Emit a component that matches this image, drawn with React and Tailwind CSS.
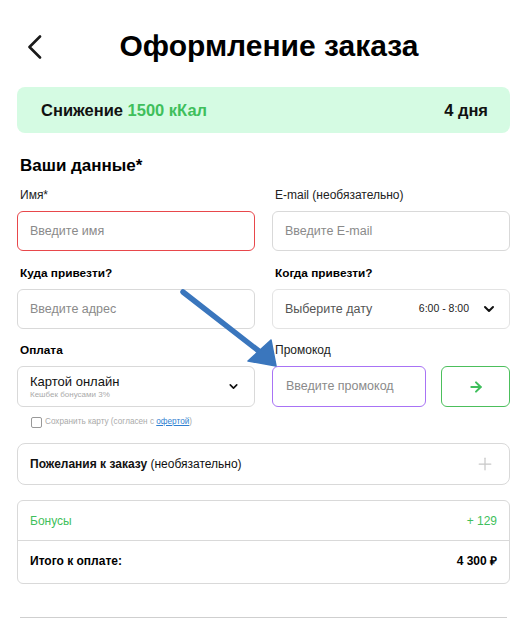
import React from "react";
import { ChevronDown, ArrowRight, Plus } from "lucide-react";

const font = { fontFamily: '"Liberation Sans", Arial, sans-serif' };

function Field({ label, bold, children }) {
    return (
        <div className="flex flex-col">
            <div className={`h-[19px] leading-[19px] mb-[6px] pl-[3px] ${bold ? "text-[11.8px] font-bold text-black" : "text-[12px] text-[#222]"}`}>
                {label}
            </div>
            {children}
        </div>
    );
}

export default function App() {
    return (
        <div className="relative w-[527px] h-[618px] bg-white overflow-hidden" style={font}>
            <div className="px-[17px]">
                <div className="relative h-[87px] flex items-center justify-center pt-[4px] pl-[11px]">
                    <svg className="absolute left-[10px] top-[35px]" width="16" height="24" viewBox="0 0 16 24">
                        <polyline points="13,1.5 2.5,12 13,22.5" fill="none" stroke="#1a1a1a" strokeWidth="2.6" strokeLinecap="round" strokeLinejoin="round" />
                    </svg>
                    <h1 className="text-[30px] font-bold text-black">Оформление заказа</h1>
                </div>

                <div className="h-[46px] rounded-[8px] bg-[#d5fbe3] flex items-center justify-between pl-[24px] pr-[22px]">
                    <div className="text-[16.5px] font-bold text-[#111]">
                        Снижение <span className="text-[#3fbf5c]">1500 кКал</span>
                    </div>
                    <div className="text-[16.5px] font-bold text-[#111]">4 дня</div>
                </div>

                <h2 className="mt-[22px] ml-[3px] text-[17px] font-bold text-black leading-[22px]">Ваши данные*</h2>

                <div className="grid grid-cols-2 gap-x-[17px] mt-[9px]">
                    <Field label="Имя*">
                        <div className="h-[40px] rounded-[6px] border border-[#e8474b] flex items-center px-[12px] text-[12.5px] text-[#8a8a8a]">
                            Введите имя
                        </div>
                    </Field>
                    <Field label="E-mail (необязательно)">
                        <div className="h-[40px] rounded-[6px] border border-[#d9d9d9] flex items-center px-[12px] text-[12.5px] text-[#8a8a8a]">
                            Введите E-mail
                        </div>
                    </Field>
                </div>

                <div className="grid grid-cols-2 gap-x-[17px] mt-[13px]">
                    <Field label="Куда привезти?" bold>
                        <div className="h-[40px] rounded-[6px] border border-[#d9d9d9] flex items-center px-[12px] text-[12.5px] text-[#8a8a8a]">
                            Введите адрес
                        </div>
                    </Field>
                    <Field label="Когда привезти?" bold>
                        <div className="h-[40px] rounded-[6px] border border-[#e3e3e3] flex items-center px-[12px] text-[12.5px] text-[#555]">
                            <span className="flex-1">Выберите дату</span>
                            <span className="text-[10.5px] text-[#222] mr-[12px]">6:00 - 8:00</span>
                            <ChevronDown size={16} strokeWidth={3} className="text-[#111]" />
                        </div>
                    </Field>
                </div>

                <div className="grid grid-cols-2 gap-x-[17px] mt-[12px]">
                    <Field label="Оплата" bold>
                        <div className="h-[41px] rounded-[6px] border border-[#d9d9d9] flex items-center pl-[12px] pr-[14px]">
                            <div className="flex-1 flex flex-col leading-none">
                                <span className="text-[13px] text-[#111]">Картой онлайн</span>
                                <span className="text-[8px] text-[#aaa] mt-[3px]">Кешбек бонусами 3%</span>
                            </div>
                            <ChevronDown size={13} strokeWidth={3} className="text-[#111]" />
                        </div>
                    </Field>
                    <Field label="Промокод">
                        <div className="flex gap-[15px]">
                            <div className="flex-1 h-[41px] rounded-[6px] border border-[#a873f5] flex items-center px-[13px] text-[12.5px] text-[#8a8a8a]">
                                Введите промокод
                            </div>
                            <div className="w-[69px] h-[41px] rounded-[6px] border border-[#4cbf5c] flex items-center justify-center">
                                <ArrowRight size={16} strokeWidth={3} className="text-[#3fbf5c]" />
                            </div>
                        </div>
                    </Field>
                </div>

                <div className="flex items-center mt-[9px] ml-[14px] text-[8.2px] text-[#aaa]">
                    <span className="w-[11px] h-[11px] border border-[#999] rounded-[2px] mr-[3px]" />
                    Сохранить карту (согласен с&nbsp;<span className="text-[#2f7fd1] underline">офертой</span>)
                </div>

                <div className="mt-[15px] h-[42px] rounded-[8px] border border-[#d9d9d9] flex items-center justify-between pl-[12px] pr-[14px]">
                    <div className="text-[12px] text-[#111]">
                        <span className="font-bold">Пожелания к заказу</span> (необязательно)
                    </div>
                    <Plus size={20} strokeWidth={1.5} className="text-[#c8c8c8]" />
                </div>

                <div className="mt-[15px] rounded-[6px] border border-[#d9d9d9]">
                    <div className="h-[40px] flex items-center justify-between px-[12px] text-[12px] text-[#3fbf5c] border-b border-[#d9d9d9]">
                        <span>Бонусы</span>
                        <span>+ 129</span>
                    </div>
                    <div className="h-[42px] flex items-center justify-between px-[12px] pb-[2px] text-[12px] font-bold text-black">
                        <span>Итого к оплате:</span>
                        <span>4 300 ₽</span>
                    </div>
                </div>

                <div className="mt-[33px] mx-[3px] h-[1px] bg-[#cfcfcf]" />
            </div>

            <svg className="absolute left-0 top-0 pointer-events-none" width="527" height="618">
                <line x1="183" y1="292" x2="260" y2="352" stroke="#3a76bd" strokeWidth="5.5" strokeLinecap="round" />
                <polygon points="276,366 271,340 248,361" fill="#3a76bd" stroke="#3a76bd" strokeWidth="1.5" strokeLinejoin="round" />
            </svg>
        </div>
    );
}
